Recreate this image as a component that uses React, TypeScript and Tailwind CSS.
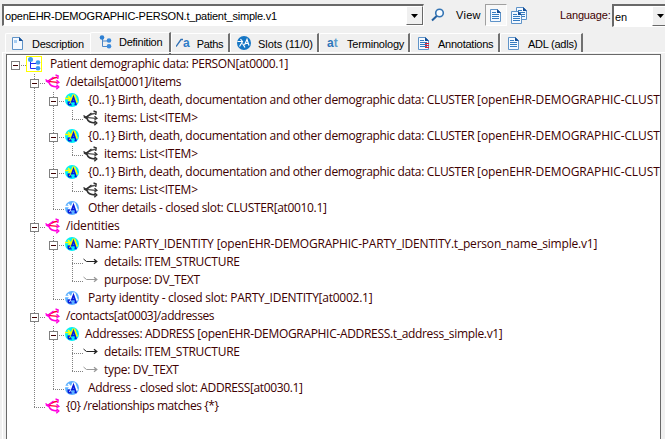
import React from "react";

type IconKind = "root" | "multi" | "multiDark" | "cluster" | "slot" | "single" | "singleGrey";

interface TreeItem {
  label: string;
  icon: IconKind;
  labelClass: string;
  archetype?: string;
  archetypeClass?: string;
  children?: TreeItem[];
}

const items: TreeItem = { label: "items: List<ITEM>", icon: "multiDark", labelClass: "ml-[5px] tracking-[-0.22px]" };
const birth: TreeItem = {
  label: "{0..1} Birth, death, documentation and other demographic data: CLUSTER ",
  icon: "cluster",
  labelClass: "ml-2 tracking-[-0.33px]",
  archetype: "[openEHR-DEMOGRAPHIC-CLUST",
  archetypeClass: "tracking-[-0.1px]",
  children: [items],
};

const tree: TreeItem = {
  label: "Patient demographic data: PERSON[at0000.1]",
  icon: "root",
  labelClass: "ml-2 tracking-[-0.37px]",
  children: [
    {
      label: "/details[at0001]/items",
      icon: "multi",
      labelClass: "ml-[5px] tracking-[-0.34px]",
      children: [
        birth,
        birth,
        birth,
        { label: "Other details - closed slot: CLUSTER[at0010.1]", icon: "slot", labelClass: "ml-2 tracking-[-0.34px]" },
      ],
    },
    {
      label: "/identities",
      icon: "multi",
      labelClass: "ml-[5px] tracking-[-0.22px]",
      children: [
        {
          label: "Name: PARTY_IDENTITY ",
          icon: "cluster",
          labelClass: "ml-[5px] tracking-[-0.15px]",
          archetype: "[openEHR-DEMOGRAPHIC-PARTY_IDENTITY.t_person_name_simple.v1]",
          archetypeClass: "tracking-[-0.2px]",
          children: [
            { label: "details: ITEM_STRUCTURE", icon: "single", labelClass: "ml-[5px] tracking-[-0.28px]" },
            { label: "purpose: DV_TEXT", icon: "singleGrey", labelClass: "ml-[5px] tracking-[-0.32px]" },
          ],
        },
        { label: "Party identity - closed slot: PARTY_IDENTITY[at0002.1]", icon: "slot", labelClass: "ml-2 tracking-[-0.25px]" },
      ],
    },
    {
      label: "/contacts[at0003]/addresses",
      icon: "multi",
      labelClass: "ml-[5px] tracking-[-0.4px]",
      children: [
        {
          label: "Addresses: ADDRESS ",
          icon: "cluster",
          labelClass: "ml-[5px] tracking-[-0.38px]",
          archetype: "[openEHR-DEMOGRAPHIC-ADDRESS.t_address_simple.v1]",
          archetypeClass: "tracking-[-0.32px]",
          children: [
            { label: "details: ITEM_STRUCTURE", icon: "single", labelClass: "ml-[5px] tracking-[-0.28px]" },
            { label: "type: DV_TEXT", icon: "singleGrey", labelClass: "ml-[5px] tracking-[-0.3px]" },
          ],
        },
        { label: "Address - closed slot: ADDRESS[at0030.1]", icon: "slot", labelClass: "ml-2 tracking-[-0.37px]" },
      ],
    },
    { label: "{0} /relationships matches {*}", icon: "multi", labelClass: "ml-[5px] tracking-[-0.42px]" },
  ],
};

function NodeIcon({ kind }: { kind: IconKind }) {
  const box = { width: 16, height: 16, viewBox: "0 0 16 16", className: "shrink-0 mb-[2px]" };
  if (kind === "root") {
    return (
      <svg {...box}>
        <rect x="0.5" y="0.5" width="15" height="15" fill="#fff" stroke="#ffff00" />
        <path d="M4.5 4v8.5H10M4.5 7.5H10" fill="none" stroke="#1c2cf0" />
        <circle cx="4.5" cy="3.5" r="2.5" fill="#3c9cf0" />
        <circle cx="12" cy="6.5" r="2.3" fill="#3c9cf0" />
        <circle cx="12" cy="12.2" r="2.3" fill="#3c9cf0" />
      </svg>
    );
  }
  if (kind === "multi" || kind === "multiDark") {
    const pink = kind === "multi";
    const c = pink ? "#ff00e0" : "#303030";
    const mid = pink ? "#ff0030" : "#505050";
    return (
      <svg {...box}>
        <path d="M3 7C5.500 6.500 7 3.500 12.500 3.200" fill="none" stroke={mid} strokeWidth="1.500" />
        <path d="M3 7.300L12.500 8.300" stroke={mid} strokeWidth="1.200" />
        <path d="M0.500 5.500L3 7.300C5 7 6 4.500 8.500 3" fill="none" stroke={c} strokeWidth="1.400" />
        <path d="M1 6.800L4 8.500C5 11.500 7 13 12.500 12.800" fill="none" stroke={c} strokeWidth="1.700" />
        <path d="M10.500 0.800L13.200 2L12.700 5M11.500 6.300L13.800 8.300L11.500 9.600M11.500 10.800L13.800 13L11.300 15.200" fill="none" stroke={c} strokeWidth="1.400" />
      </svg>
    );
  }
  if (kind === "cluster" || kind === "slot") {
    const cluster = kind === "cluster";
    const light = cluster ? "#ffff00" : "#fff";
    return (
      <svg {...box}>
        <circle cx="8" cy="8" r="7" fill={cluster ? "#00f0f8" : "#5cb0ff"} />
        <path d="M1 6.500H6M4 4L6.500 6.500L4.500 9" fill="none" stroke={light} strokeWidth="1.500" />
        <path d="M6.500 9.500L9 3.500H10.500L13.200 10.500" fill="none" stroke={light} strokeWidth="1.800" />
        <path d="M3.500 9.500H6L8 13.500H4.500L3.500 12Z" fill="#0818d8" />
        <path d="M7.500 10.500L9.500 5L12 12.500H10.500M8 9.500H11" fill="none" stroke="#0818d8" strokeWidth="1.500" />
        <path d="M5 11.500L7 10.500" stroke={light} strokeWidth="0.900" />
      </svg>
    );
  }
  const c = kind === "single" ? "#222" : "#999";
  return (
    <svg {...box}>
      <path d="M0.500 5L3.500 7.500H13.500" fill="none" stroke={c} />
      <path d="M11 5.200L13.800 7.500L11 9.800" fill="none" stroke={c} strokeWidth="1.300" />
    </svg>
  );
}

const VLINE = "w-px bg-[repeating-linear-gradient(to_bottom,#808080_0,#808080_1px,transparent_1px,transparent_2px)]";
const HLINE = "h-px bg-[repeating-linear-gradient(to_right,#808080_0,#808080_1px,transparent_1px,transparent_2px)]";

function Branch({ level, last, expandable }: { level: number; last: boolean; expandable: boolean }) {
  return (
    <span className="grid h-[18px] w-[19px] shrink-0">
      {level > 0 && <span className={`col-start-1 row-start-1 ml-2 ${last ? "h-[9px]" : "h-[18px]"} ${VLINE}`} />}
      <span className={`col-start-1 row-start-1 mt-[9px] ml-2 w-[11px] ${HLINE}`} />
      {expandable && (
        <span className="col-start-1 row-start-1 mt-[5px] ml-1 flex h-[9px] w-[9px] items-center justify-center border border-[#808080] bg-white">
          <span className="h-px w-[5px] bg-[#400000]" />
        </span>
      )}
    </span>
  );
}

function TreeNode({ node, trail, last }: { node: TreeItem; trail: boolean[]; last: boolean }) {
  const next = [...trail, !last];
  return (
    <li>
      <div className="flex h-[18px] items-center whitespace-nowrap">
        {trail.map((on, i) => (
          <span key={i} className="flex h-[18px] w-[19px] shrink-0 pl-2">
            {on && <span className={VLINE} />}
          </span>
        ))}
        <Branch level={trail.length} last={last} expandable={!!node.children} />
        <NodeIcon kind={node.icon} />
        <span className={`-mt-[3px] text-[12px] leading-[16px] whitespace-pre ${node.labelClass}`}>
          {node.label}
          {node.archetype && <span className={node.archetypeClass}>{node.archetype}</span>}
        </span>
      </div>
      {node.children && (
        <ul>
          {node.children.map((c, i) => (
            <TreeNode key={i} node={c} trail={next} last={i === node.children!.length - 1} />
          ))}
        </ul>
      )}
    </li>
  );
}

function DocIcon({ mark = false, blank = false }: { mark?: boolean; blank?: boolean }) {
  return (
    <svg width="12" height="13" viewBox="0 0 12 13" className="shrink-0">
      <path d="M0.500 0.500H7.500L10.500 3.500V12.500H0.500Z" fill="#f4f9ff" stroke="#5f93c8" />
      <path d="M7 0v4h4z" fill="#164f96" />
      {blank ? (
        <path d="M2 3h3v3H2z" fill="#a6cdf2" />
      ) : (
        <path d="M2 3.500h4M2 5.500h7M2 7.500h7M2 9.500h7" stroke="#347bc0" />
      )}
      {mark && <path d="M7 6.500h4M7 8.500h4M7 10.500h4" stroke="#e02030" strokeWidth="1.200" />}
    </svg>
  );
}

function DefinitionIcon() {
  return (
    <svg width="14" height="14" viewBox="0 0 14 14" className="shrink-0">
      <path d="M3.500 3v8.500H9M3.500 6H9" fill="none" stroke="#4c87c8" />
      <circle cx="3" cy="2.500" r="2.300" fill="#2e7fd2" />
      <circle cx="10" cy="5.500" r="2.300" fill="#3c8bdc" />
      <circle cx="10" cy="11.300" r="2.300" fill="#3c8bdc" />
    </svg>
  );
}

function PathsIcon() {
  return (
    <span className="flex items-center text-[12px] leading-[12px] font-bold text-[#2f7cc8]">
      <svg width="7" height="10" viewBox="0 0 7 10">
        <path d="M0 8.500L5 1.500H7" fill="none" stroke="#2f6fb4" strokeWidth="1.300" />
      </svg>
      a
    </span>
  );
}

function SlotsIcon() {
  return (
    <svg width="14" height="14" viewBox="0 0 14 14" className="shrink-0">
      <circle cx="7" cy="7" r="7" fill="#1676c4" />
      <path d="M0.500 5.500H5M3.500 3L5.500 5.500L2.500 10.500M5.500 7.500L8 11.500M7.500 9L10 3.500L12 9.500M8.500 7.500h3" fill="none" stroke="#fff" strokeWidth="1.200" />
    </svg>
  );
}

interface TabProps {
  icon: React.ReactNode;
  label: string;
  size: string;
  labelClass: string;
  active?: boolean;
}

function Tab({ icon, label, size, labelClass, active }: TabProps) {
  return (
    <div
      className={`flex shrink-0 items-center rounded-tl-[2px] border-t border-l border-white bg-[#f0f0f0] ${
        active ? "h-[22px] border-r-0 pb-[3px]" : "h-[19px] border-r-2 border-r-[#707070]"
      } ${size}`}
    >
      {icon}
      <span className={`${active ? "" : "mt-[2px]"} ${labelClass}`}>{label}</span>
    </div>
  );
}

function DropButton() {
  return (
    <span className="flex w-[17px] shrink-0 items-center justify-center border border-t-white border-r-[#696969] border-b-[#696969] border-l-white bg-[#f0f0f0]">
      <svg width="7" height="4" viewBox="0 0 7 4">
        <path d="M0 0h7L3.500 4z" fill="#000" />
      </svg>
    </span>
  );
}

export default function App() {
  return (
    <div className="flex h-[439px] w-[665px] flex-col overflow-hidden bg-[#f0f0f0] font-['Liberation_Sans',Arial,sans-serif] text-[11px] leading-[14px] whitespace-nowrap text-black">
      <header className="flex h-[32px] shrink-0 items-start pt-1 pl-[2px]">
        <div className="flex h-[22px] w-[422px] shrink-0 border-t-2 border-r border-b border-l-2 border-t-[#696969] border-r-white border-b-white border-l-[#696969] bg-white">
          <span className="mt-[3px] ml-px flex-1 tracking-[-0.23px]">openEHR-DEMOGRAPHIC-PERSON.t_patient_simple.v1</span>
          <DropButton />
        </div>
        <svg width="14" height="14" viewBox="0 0 14 14" className="mt-1 ml-[7px] shrink-0">
          <circle cx="8.500" cy="5" r="3.800" fill="#f8fcff" stroke="#3474b4" strokeWidth="1.600" />
          <path d="M5.700 8L1 12.500" stroke="#24609f" strokeWidth="2" />
        </svg>
        <span className="mt-1 ml-[11px] w-[29px] shrink-0 tracking-[0.3px]">View</span>
        <span className="flex h-[22px] w-[22px] shrink-0 items-center justify-center border border-t-[#a0a0a0] border-r-white border-b-white border-l-[#a0a0a0] bg-[#f8f8f8]">
          <DocIcon />
        </span>
        <span className="mt-[3px] ml-1 grid h-[17px] w-[17px] shrink-0">
          <span className="col-start-1 row-start-1 ml-[5px]"><DocIcon /></span>
          <span className="col-start-1 row-start-1 mt-1"><DocIcon /></span>
        </span>
        <span className="mt-1 ml-[32px] w-[52px] shrink-0 tracking-[-0.15px] text-[#400000]">Language:</span>
        <div className="flex h-[23px] w-[57px] shrink-0 border-t-2 border-b border-l-2 border-t-[#696969] border-b-white border-l-[#696969] bg-white">
          <span className="mt-[4px] ml-px w-[37px] shrink-0">en</span>
          <DropButton />
        </div>
      </header>

      <nav className="flex h-[20px] shrink-0 items-end pl-[5px]">
        <Tab icon={<DocIcon blank />} label="Description" size="w-[85px] pl-[6px] border-r-0!" labelClass="ml-2 tracking-[-0.3px]" />
        <Tab icon={<DefinitionIcon />} label="Definition" active size="w-[81px] pl-2 border-r-2! border-r-[#707070]! -mb-[2px]" labelClass="ml-[6px] tracking-[-0.25px]" />
        <Tab icon={<PathsIcon />} label="Paths" size="w-[59px] pl-1" labelClass="ml-[7px] tracking-[-0.3px]" />
        <Tab icon={<SlotsIcon />} label="Slots (11/0)" size="w-[89px] pl-[6px]" labelClass="ml-[7px] tracking-[-0.05px]" />
        <Tab icon={<span className="w-[13px] text-[12px] font-bold text-[#2f75b8]">a<span className="text-[#5f9ccc]">t</span></span>} label="Terminology" size="w-[91px] pl-[7px]" labelClass="ml-[7px] tracking-[-0.2px]" />
        <Tab icon={<DocIcon mark />} label="Annotations" size="w-[90px] pl-[7px]" labelClass="ml-2 tracking-[-0.25px]" />
        <Tab icon={<DocIcon />} label="ADL (adls)" size="w-[83px] pl-[7px]" labelClass="ml-2 tracking-[-0.25px]" />
      </nav>

      <main className="ml-[2px] flex flex-1 border-t border-l border-white pt-px pl-[3px]">
        <ul className="w-[655px] overflow-hidden border-t border-r border-l border-[#696969] bg-white pt-px font-['Open_Sans','Noto_Sans',sans-serif] text-[#400000]">
          <TreeNode node={tree} trail={[]} last />
        </ul>
      </main>
    </div>
  );
}
